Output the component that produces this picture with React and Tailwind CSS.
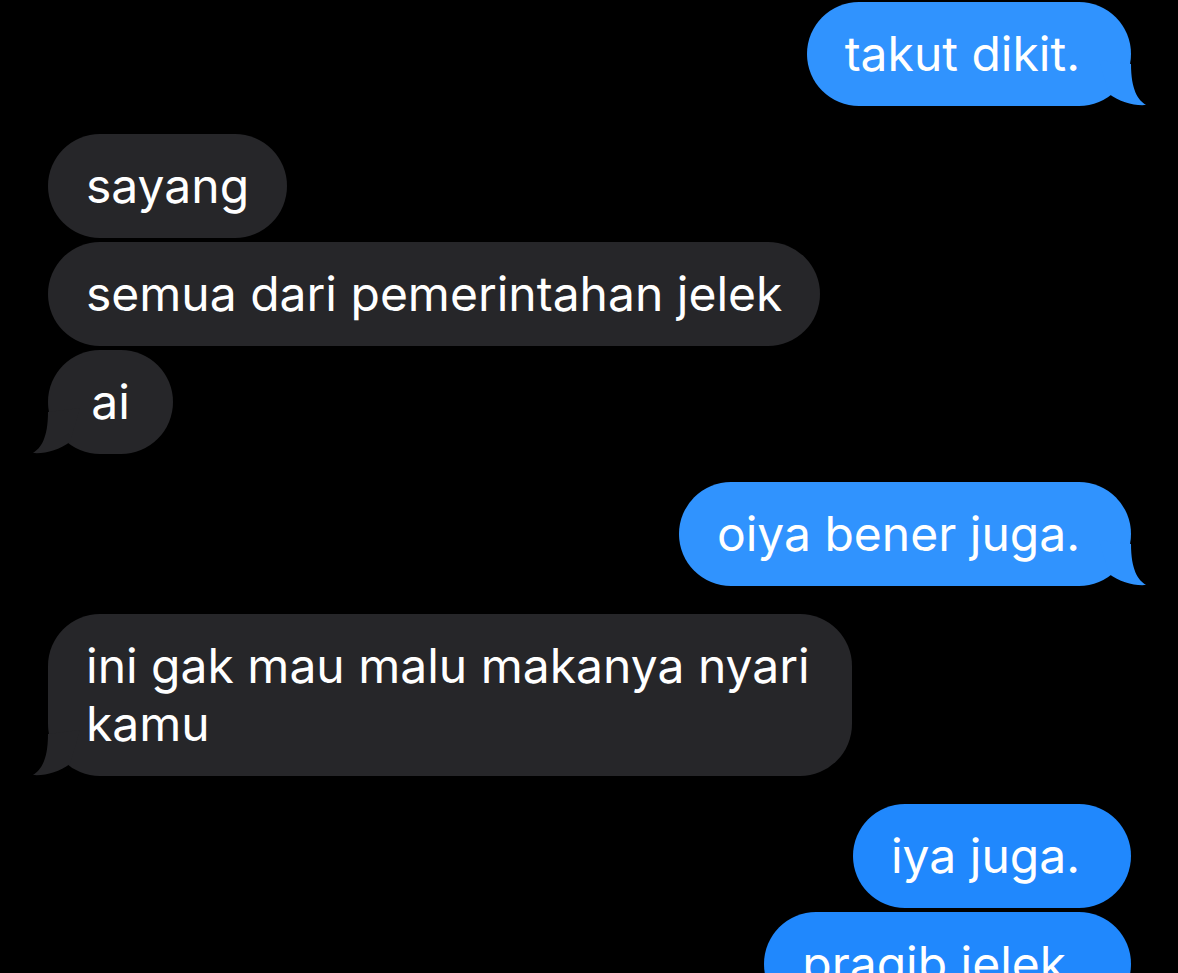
const messages = [
  { id: 1, me: true, text: "takut dikit.", tail: true, first: true },
  { id: 2, me: false, text: "sayang", first: true },
  { id: 3, me: false, text: "semua dari pemerintahan jelek" },
  { id: 4, me: false, text: "ai", tail: true },
  { id: 5, me: true, text: "oiya bener juga.", tail: true, first: true },
  { id: 6, me: false, text: "ini gak mau malu makanya nyari kamu", tail: true, first: true },
  { id: 7, me: true, text: "iya juga.", first: true, dark: true },
  { id: 8, me: true, text: "pragib jelek.", dark: true },
];

function Tail({ me, color }) {
  return (
    <svg
      className={`absolute bottom-0 ${me ? "right-[-16px]" : "left-[-16px] scale-x-[-1]"}`}
      width="48"
      height="46"
      viewBox="0 0 48 46"
    >
      <path d="M10 34 C21 42 35 46 47 45 C39 40 32 30 32 4 L0 0 Z" fill={color} />
    </svg>
  );
}

function Bubble({ msg }) {
  const color = msg.me ? (msg.dark ? "#2088fd" : "#3093fe") : "#262629";
  return (
    <div className={`flex ${msg.me ? "justify-end" : "justify-start"} ${msg.first ? "mt-[28px] first:mt-0" : "mt-[4px]"}`}>
      <div
        className={`relative rounded-[52px] py-[23px] text-[48px] leading-[58px] text-white ${
          msg.me ? "pl-[38px] pr-[51px]" : "px-[38px] max-w-[804px]"
        } ${msg.text === "ai" ? "min-w-[125px] text-center" : ""} ${
          msg.me ? (msg.dark ? "bg-[#2088fd]" : "bg-[#3093fe]") : "bg-[#262629]"
        }`}
      >
        {msg.tail && <Tail me={msg.me} color={color} />}
        <span className="relative">{msg.text}</span>
      </div>
    </div>
  );
}

export default function App() {
  return (
    <div
      className="h-[973px] w-[1178px] overflow-hidden bg-black pl-[48px] pr-[47px] pt-[2px]"
      style={{ fontFamily: "Inter, 'Noto Sans', sans-serif" }}
    >
      {messages.map((m) => (
        <Bubble key={m.id} msg={m} />
      ))}
    </div>
  );
}
